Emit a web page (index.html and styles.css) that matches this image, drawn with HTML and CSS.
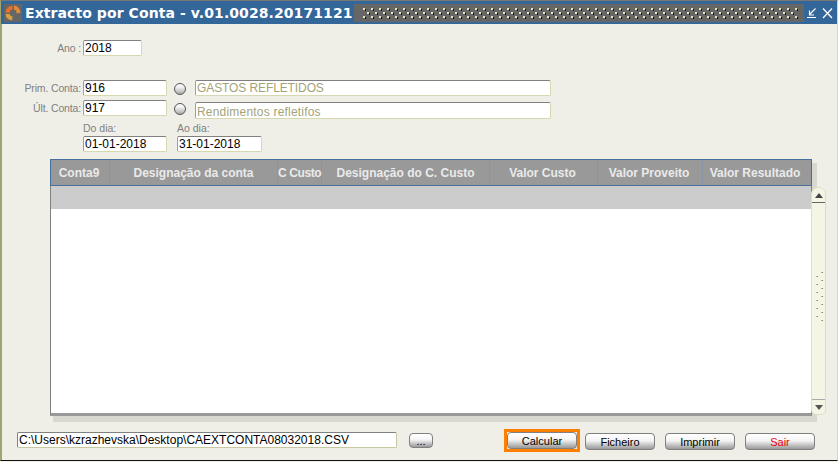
FILE: index.html
```html
<!DOCTYPE html>
<html lang="pt">
<head>
    <meta charset="UTF-8">
    <title>Extracto por Conta</title>
    <link rel="stylesheet" href="styles.css">
</head>
<body>
<div class="window">
    <div class="titlebar">
        <svg class="logo" width="18" height="18" viewBox="0 0 18 18">
            <rect width="18" height="18" fill="#666"/>
            <path d="M8.5 1.5A7.5 7.5 0 0 0 1.5 8.5L5.5 9A3.5 3.5 0 0 1 8.5 5.5Z" fill="#e8702a"/>
            <path d="M10 1.5A7.5 7.5 0 0 1 16.5 9L12.5 9.5A3.5 3.5 0 0 0 10 5.5Z" fill="#e08a3a"/>
            <path d="M1.5 10A7.5 7.5 0 0 0 8 16.5L8.5 12.5A3.5 3.5 0 0 1 5.5 10Z" fill="#d9a040"/>
        </svg>
        <span class="title">Extracto por Conta - v.01.0028.20171121</span>
        <svg class="dots" height="18">
            <defs>
                <pattern id="dotgrid" width="8" height="8" patternUnits="userSpaceOnUse">
                    <rect x="1" y="4" width="2" height="2" fill="#e4e4b8"/>
                    <rect x="3" y="5" width="1" height="2" fill="#111"/>
                    <rect x="5" y="0" width="2" height="2" fill="#e4e4b8"/>
                    <rect x="7" y="1" width="1" height="2" fill="#111"/>
                </pattern>
            </defs>
            <rect x="8" y="3" width="436" height="12" fill="url(#dotgrid)"/>
        </svg>
        <svg class="winbtn win-min" width="12" height="18" viewBox="0 0 12 18">
            <path d="M1 13.5H10M9.5 4.5L3.5 10.5M3.5 6.5V11H8" fill="none" stroke="#fff" stroke-width="1.2"/>
        </svg>
        <svg class="winbtn win-close" width="11" height="18" viewBox="0 0 11 18">
            <path d="M1 4.5L10 14M10 4.5L1 14" fill="none" stroke="#fff" stroke-width="1.3"/>
        </svg>
    </div>

    <div class="content">
        <div class="row row-ano">
            <label class="lbl">Ano :</label>
            <div class="field w-ano">2018</div>
        </div>

        <div class="row row-prim">
            <label class="lbl">Prim. Conta:</label>
            <div class="field w-conta">916</div>
            <span class="lookup"></span>
            <div class="field w-desc muted">GASTOS REFLETIDOS</div>
        </div>
        <div class="row row-ult">
            <label class="lbl">Últ. Conta:</label>
            <div class="field w-conta">917</div>
            <span class="lookup"></span>
            <div class="field w-desc muted tall">Rendimentos refletifos</div>
        </div>

        <div class="dates">
            <div class="date">
                <label class="lbl-top">Do dia:</label>
                <div class="field w-conta">01-01-2018</div>
            </div>
            <div class="date">
                <label class="lbl-top">Ao dia:</label>
                <div class="field w-conta">31-01-2018</div>
            </div>
        </div>

        <div class="grid-area">
            <div class="grid">
                <div class="grid-head">
                    <div class="col c1">Conta9</div>
                    <div class="col c2">Designação da conta</div>
                    <div class="col c3">C Custo</div>
                    <div class="col c4">Designação do C. Custo</div>
                    <div class="col c5">Valor Custo</div>
                    <div class="col c6">Valor Proveito</div>
                    <div class="col c7">Valor Resultado</div>
                </div>
                <div class="grid-body">
                    <div class="grid-row"></div>
                </div>
            </div>
            <div class="scrollbar">
                <div class="arrow up"></div>
                <svg class="grip" width="13">
                    <defs>
                        <pattern id="gripdots" width="13" height="8" patternUnits="userSpaceOnUse">
                            <rect x="4" y="0" width="1" height="1" fill="#fff"/>
                            <rect x="5" y="1" width="1" height="1" fill="#8a8a50"/>
                            <rect x="4" y="1" width="1" height="1" fill="#b5b58a"/>
                            <rect x="9" y="4" width="1" height="1" fill="#fff"/>
                            <rect x="10" y="5" width="1" height="1" fill="#8a8a50"/>
                            <rect x="9" y="5" width="1" height="1" fill="#b5b58a"/>
                        </pattern>
                    </defs>
                    <rect y="68" width="13" height="50" fill="url(#gripdots)"/>
                </svg>
                <div class="arrow down"></div>
            </div>
        </div>

        <div class="footer">
            <div class="field w-path">C:\Users\kzrazhevska\Desktop\CAEXTCONTA08032018.CSV</div>
            <button class="btn btn-browse">...</button>
            <div class="actions">
                <div class="focus"><button class="btn">Calcular</button></div>
                <button class="btn btn-first">Ficheiro</button>
                <button class="btn">Imprimir</button>
                <button class="btn btn-exit">Sair</button>
            </div>
        </div>
    </div>
</div>
</body>
</html>
```

FILE: styles.css
```css
html, body {
    margin: 0;
    padding: 0;
}
body {
    width: 838px;
    height: 462px;
    overflow: hidden;
    background: #f0efe8;
    font-family: "Liberation Sans", Arial, sans-serif;
    font-size: 12px;
}
.window {
    box-sizing: border-box;
    width: 838px;
    height: 461px;
    background: #efefe7;
    border-left: 1px solid #a3a36f;
    border-right: 1px solid #d8d8b8;
    border-bottom: 1px solid #111;
    border-top: 1px solid #777;
    display: flex;
    flex-direction: column;
}
.titlebar {
    flex: none;
    height: 23px;
    padding: 3px 4px 2px 3px;
    box-sizing: border-box;
    background: #336699;
    display: flex;
    align-items: flex-start;
}
.logo {
    flex: none;
}
.title {
    margin-left: 3px;
    width: 329px;
    flex: none;
    color: #fff;
    font-family: "DejaVu Sans", sans-serif;
    font-weight: bold;
    font-size: 14px;
    letter-spacing: 0.08px;
    line-height: 18px;
    white-space: nowrap;
}
.dots {
    flex: none;
    width: 450px;
    background: #666;
}
.winbtn {
    flex: none;
}
.win-min {
    margin-left: 2px;
}
.win-close {
    margin-left: 4px;
}
.content {
    flex: 1;
    box-shadow: inset 1px 0 0 #a3a36f;
}
.row {
    display: flex;
    align-items: flex-start;
}
.row-ano {
    padding-top: 16px;
}
.row-prim {
    margin-top: 24px;
}
.row-ult {
    margin-top: 4px;
}
.lbl {
    box-sizing: border-box;
    width: 80px;
    padding-top: 1px;
    text-align: right;
    color: #808080;
    font-size: 10.5px;
    letter-spacing: -0.15px;
    line-height: 14px;
}
.field {
    box-sizing: border-box;
    height: 16px;
    margin-left: 2px;
    padding-left: 1px;
    background: #fff;
    border: 1px solid #d6d8b0;
    border-top-color: #808080;
    border-left-color: #a0a090;
    border-radius: 2px;
    color: #000;
    font-size: 12px;
    line-height: 15px;
    white-space: nowrap;
}
.w-ano {
    width: 59px;
}
.w-conta {
    width: 84px;
}
.w-desc {
    width: 356px;
    margin-left: 9px;
}
.w-path {
    width: 380px;
    margin-left: 0;
    border-color: #c8c8a0;
    border-top-color: #808080;
    border-left-color: #808080;
}
.muted {
    color: #a3a37a;
    letter-spacing: -0.1px;
}
.tall {
    height: 17px;
    margin-top: 2px;
    line-height: 19px;
    letter-spacing: 0.2px;
}
.lookup {
    flex: none;
    box-sizing: border-box;
    width: 12px;
    height: 12px;
    margin: 3px 0 0 7px;
    border: 1px solid #555;
    border-radius: 6px;
    background: linear-gradient(#fff, #eee 35%, #aaa);
}
.dates {
    display: flex;
    gap: 10px;
    margin: 3px 0 0 82px;
}
.date .field {
    margin-left: 0;
}
.date + .date .field {
    width: 85px;
}
.lbl-top {
    display: block;
    height: 14px;
    color: #808080;
    font-size: 10.5px;
    line-height: 13px;
}
.grid-area {
    display: flex;
    align-items: flex-start;
    margin: 7px 0 0 49px;
    width: 776px;
    height: 262px;
}
.grid {
    flex: none;
    width: 762px;
    height: 257px;
    display: flex;
    flex-direction: column;
    box-shadow: 4px 5px 0 1px #d8d8d0;
}
.grid-head {
    box-sizing: border-box;
    height: 27px;
    flex: none;
    display: flex;
    background: #999;
    border: 1px solid #47709e;
}
.col {
    box-sizing: border-box;
    flex: none;
    height: 25px;
    border-right: 1px solid #8594a6;
    color: #eaeaea;
    font-weight: bold;
    font-size: 12px;
    line-height: 26px;
    text-align: center;
    white-space: nowrap;
}
.c1 { width: 59px; padding-right: 2px; }
.c2 { width: 168px; }
.c3 { width: 44px; padding-right: 4px; letter-spacing: -0.4px; }
.c4 { width: 168px; }
.c5 { width: 108px; padding-right: 2px; }
.c6 { width: 105px; padding-right: 2px; }
.c7 { width: 108px; padding-right: 4px; border-right: none; }
.grid-body {
    flex: 1;
    background: #fff;
    border-left: 1px solid #808080;
    border-right: 1px solid #808080;
    border-bottom: 3px solid #999;
}
.grid-row {
    height: 23px;
    background: #ccc;
}
.scrollbar {
    flex: none;
    box-sizing: border-box;
    width: 15px;
    height: 228px;
    margin: 28px 0 0 -1px;
    background: #f5f5e6;
    border: 1px solid #dedec0;
    border-radius: 7px 7px 5px 5px;
    display: flex;
    flex-direction: column;
}
.arrow {
    height: 14px;
    flex: none;
    display: flex;
    align-items: center;
    justify-content: center;
}
.arrow.up {
    border-bottom: 1px solid #666;
}
.arrow.down {
    border-top: 1px solid #aaa;
}
.arrow::before {
    content: "";
    border-left: 4px solid transparent;
    border-right: 4px solid transparent;
}
.arrow.up::before {
    border-bottom: 5px solid #444;
}
.arrow.down::before {
    border-top: 5px solid #555;
}
.grip {
    flex: 1;
    min-height: 0;
}
.footer {
    display: flex;
    align-items: flex-start;
    margin: 11px 0 0 16px;
    width: 800px;
}
.btn {
    box-sizing: border-box;
    width: 70px;
    height: 17px;
    padding: 0;
    border: 1px solid #808080;
    border-radius: 4px;
    background: linear-gradient(#fff 0%, #f4f4f4 45%, #999 100%);
    font-family: "Liberation Sans", Arial, sans-serif;
    font-size: 11px;
    line-height: 14px;
    color: #000;
}
.btn-browse {
    width: 24px;
    height: 15px;
    margin: 1px 0 0 12px;
    line-height: 10px;
}
.btn-exit {
    color: #e8000d;
}
.actions {
    margin: -3px 0 0 71px;
    display: flex;
    align-items: flex-start;
    gap: 10px;
}
.actions > .btn {
    margin-top: 4px;
}
.actions > .btn-first {
    margin-left: -5px;
}
.focus {
    box-sizing: border-box;
    width: 76px;
    height: 23px;
    border: 3px solid #ff8000;
}
.focus .btn {
    display: block;
}
```
